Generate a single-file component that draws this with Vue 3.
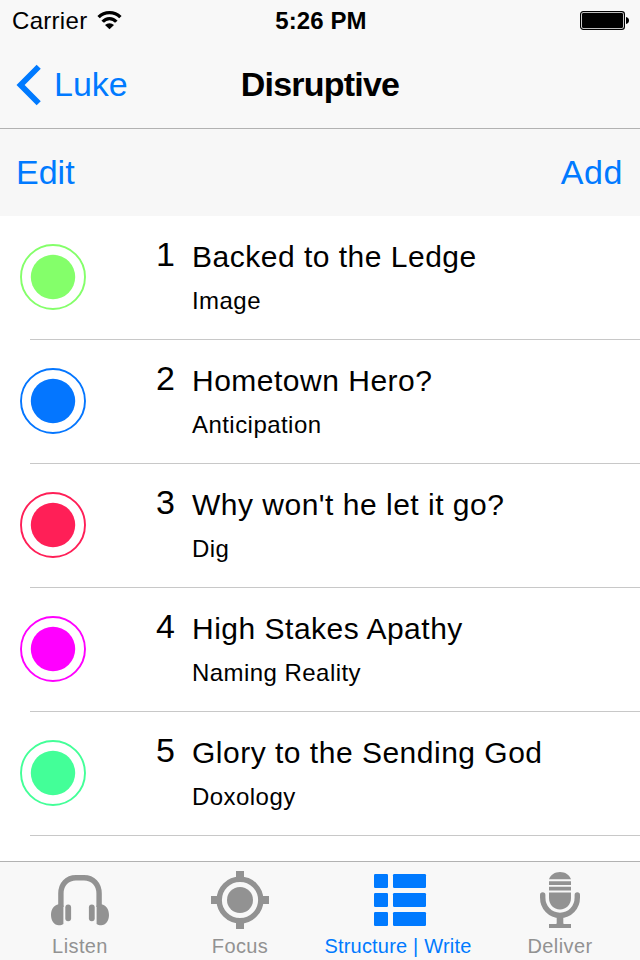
<script setup>
const beats = [
  { title: 'Backed to the Ledge', kind: 'Image', color: '#84ff6a' },
  { title: 'Hometown Hero?', kind: 'Anticipation', color: '#0476ff' },
  { title: "Why won't he let it go?", kind: 'Dig', color: '#ff1f57' },
  { title: 'High Stakes Apathy', kind: 'Naming Reality', color: '#ff00ff' },
  { title: 'Glory to the Sending God', kind: 'Doxology', color: '#43ff98' },
]
</script>

<template>
  <div class="screen">
    <header class="top">
      <div class="status">
        <div class="carrier">
          <span>Carrier</span>
          <svg class="wifi" width="25" height="20" viewBox="0 0 25 20">
            <g fill="none" stroke="#000" stroke-width="3.3">
              <path d="M1.6 7.200A15.200 15.200 0 0 1 23.400 7.200" />
              <path d="M5.700 11.800A8.800 8.800 0 0 1 19.300 11.800" />
            </g>
            <path d="M8 15A6.600 6.600 0 0 1 17 15L12.500 19.200Z" />
          </svg>
        </div>
        <div class="clock">5:26 PM</div>
        <svg class="battery" width="50" height="20" viewBox="0 0 50 20">
          <rect x=".6" y=".6" width="43.800" height="17.800" rx="2.600" fill="#fff" stroke="#000" stroke-width="1.200" />
          <rect x="2" y="2" width="41" height="15" rx="1.200" />
          <path d="M46 6c2 .4 3 1.800 3 3.500s-1 3.100-3 3.500Z" />
        </svg>
      </div>
      <nav class="nav">
        <a class="back">
          <svg class="chevron" width="26" height="42" viewBox="0 0 26 42">
            <path d="M22.700 2.800 4.600 21l18.100 18.200" fill="none" stroke="#007aff" stroke-width="5.800" />
          </svg>
          <span>Luke</span>
        </a>
        <h1>Disruptive</h1>
        <span></span>
      </nav>
    </header>
    <div class="toolbar"><a>Edit</a><a class="add">Add</a></div>
    <ul class="list">
      <li v-for="(b, i) in beats" :key="b.title" class="row">
        <svg class="dot" width="66" height="66" viewBox="0 0 66 66">
          <circle cx="33" cy="33" r="32" fill="none" :stroke="b.color" stroke-width="1.900" />
          <circle cx="33" cy="33" r="22.200" :fill="b.color" />
        </svg>
        <div class="num">{{ i + 1 }}</div>
        <div class="text">
          <div class="title">{{ b.title }}</div>
          <div class="kind">{{ b.kind }}</div>
        </div>
      </li>
    </ul>
    <footer class="tabs">
      <a class="tab">
        <svg width="60" height="60" viewBox="0 0 60 60">
          <path d="M10.900 37V23.500C10.900 14 17 7.700 26 7.700h8c9 0 15.100 6.300 15.100 15.800V37" fill="none" stroke="#929292" stroke-width="5.400" />
          <path d="M13.400 35.500v18.500c-1 .9-2.700 1.300-4.600 1.300C4.200 55.300 1 50.500 1 45S4 35 8.600 34.300ZM46.600 35.500v18.500c1 .9 2.700 1.300 4.600 1.300C55.800 55.300 59 50.500 59 45S56 35 51.400 34.300Z" />
          <rect x="15.300" y="34.600" width="5.800" height="16.600" rx="2.900" />
          <rect x="38.900" y="34.600" width="5.800" height="16.600" rx="2.900" />
        </svg>
        <span>Listen</span>
      </a>
      <a class="tab">
        <svg width="60" height="60" viewBox="0 0 60 60">
          <circle cx="30" cy="30" r="20.800" fill="none" stroke="#929292" stroke-width="5.400" />
          <circle cx="30" cy="30" r="13" />
          <path d="M26 1h8v7h-8zM26 52h8v7h-8zM1 26h7v8H1zM52 26h7v8h-7z" />
        </svg>
        <span>Focus</span>
      </a>
      <a class="tab active">
        <svg width="60" height="60" viewBox="0 0 60 60">
          <rect v-for="n in 3" :key="'a' + n" x="4" :y="4 + (n - 1) * 19" width="14" height="14" rx="1.200" />
          <rect v-for="n in 3" :key="'b' + n" x="23" :y="4 + (n - 1) * 19" width="33" height="14" rx="1.200" />
        </svg>
        <span>Structure | Write</span>
      </a>
      <a class="tab">
        <svg width="60" height="60" viewBox="0 0 60 60">
          <path d="M19 9.300C20.500 4.800 25 2 30 2s9.500 2.800 11 7.300ZM19 11.200h22v3.700H19zM19 16.800h22v3.700H19zM19 22.600h22V28c0 6.700-4.700 11.400-11 11.400S19 34.700 19 28Z" />
          <path d="M12.700 25v2.500C12.700 37.500 20 45.400 30 45.400s17.300-7.900 17.300-17.900V25" fill="none" stroke="#929292" stroke-width="5.400" stroke-linecap="round" />
          <path d="M26.700 47h6.600v6c0 .6.400 1 1 1H41v4H19v-4h6.700c.6 0 1-.4 1-1Z" />
        </svg>
        <span>Deliver</span>
      </a>
    </footer>
  </div>
</template>

<style>
body { background: #fff; }
</style>

<style scoped>
.screen { width: 640px; height: 960px; display: flex; flex-direction: column; overflow: hidden; background: #fff; color: #000; font-family: "Liberation Sans", Arial, sans-serif; }
.top { height: 128px; flex: none; background: #f8f8f8; border-bottom: 1px solid #b2b2b2; }
.status { height: 40px; display: grid; grid-template-columns: 1fr auto 1fr; align-items: center; padding: 0 10px 0 12px; font-size: 24px; line-height: 28px; }
.carrier { display: flex; align-items: center; gap: 10px; letter-spacing: .3px; padding-top: 2px; }
.wifi { margin-top: -2px; }
.clock { font-weight: 700; letter-spacing: .1px; padding-top: 2px; }
.battery { justify-self: end; margin-top: 2px; }
.nav { height: 88px; display: grid; grid-template-columns: 1fr auto 1fr; align-items: center; padding: 0 16px; font-size: 34px; line-height: 40px; }
.back { display: flex; align-items: center; gap: 12px; color: #007aff; }
.chevron { margin-top: 1px; }
h1 { margin: 0; font-size: 34px; line-height: 40px; font-weight: 700; letter-spacing: -.8px; }
.toolbar { height: 87px; flex: none; box-sizing: border-box; display: flex; justify-content: space-between; align-items: center; padding: 0 17px 2px 16px; background: #f7f7f7; color: #007aff; font-size: 34px; line-height: 40px; }
.add { letter-spacing: .6px; }
.list { flex: 1; min-height: 0; margin: 0; padding: 0; list-style: none; overflow: hidden; }
.row { height: 124px; box-sizing: border-box; display: flex; align-items: flex-start; padding-left: 20px; background: linear-gradient(#c8c8c8, #c8c8c8) 30px 100% / 100% 1px no-repeat; }
.dot { margin-top: 28px; flex: none; }
.num { width: 89px; padding-top: 18px; text-align: right; font-size: 34px; line-height: 40px; }
.text { padding: 23px 0 0 17px; white-space: nowrap; }
.title { font-size: 30px; line-height: 36px; letter-spacing: .5px; }
.kind { margin-top: 12px; font-size: 24px; line-height: 28px; letter-spacing: .45px; }
.tabs { height: 98px; flex: none; display: grid; grid-template-columns: repeat(4, 1fr); background: #f8f8f8; border-top: 1px solid #b2b2b2; color: #929292; }
.tab { display: flex; flex-direction: column; align-items: center; padding-top: 8px; font-size: 20px; line-height: 24px; letter-spacing: .4px; white-space: nowrap; }
.tab svg { fill: currentColor; flex: none; }
.tab span { margin-top: 4px; }
.active { color: #007aff; }
.active span { letter-spacing: .2px; margin-right: 4px; }
</style>
